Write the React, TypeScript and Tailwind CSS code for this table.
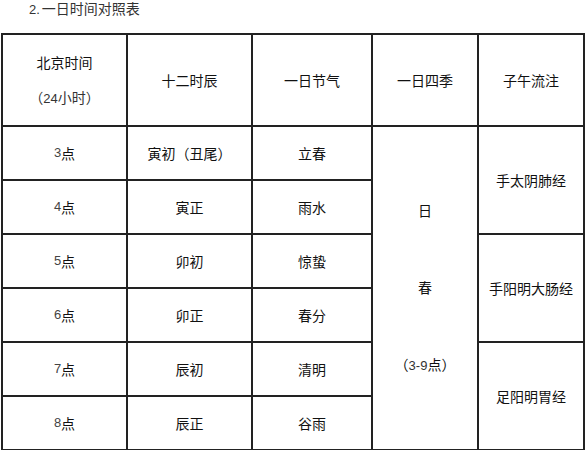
import React from "react";

const rows = [
  { time: "3", shichen: "寅初（丑尾）", jieqi: "立春" },
  { time: "4", shichen: "寅正", jieqi: "雨水" },
  { time: "5", shichen: "卯初", jieqi: "惊蛰" },
  { time: "6", shichen: "卯正", jieqi: "春分" },
  { time: "7", shichen: "辰初", jieqi: "清明" },
  { time: "8", shichen: "辰正", jieqi: "谷雨" },
];

const meridians = ["手太阴肺经", "手阳明大肠经", "足阳明胃经"];

const cell = "bg-white flex items-center justify-center text-center";

export default function App() {
  return (
    <div
      className="w-[585px] h-[450px] overflow-hidden bg-white text-[14px] text-[#111]"
      style={{ fontFamily: '"Noto Sans CJK SC", "Liberation Sans", sans-serif' }}
    >
      {/* title line, cut at the top of the view */}
      <div className="h-[33px] pl-[29px] leading-[16px] text-[#333]">
        <span className="font-['Liberation_Sans'] text-[13px]">2.</span>
        <span className="ml-[2px]">一日时间对照表</span>
      </div>

      <div className="ml-[1px] grid w-[584px] grid-cols-[123px_123px_118px_104px_104px] grid-rows-[90px_repeat(6,52px)] gap-[2px] border-2 border-[#222] bg-[#222]">
        {/* header */}
        <div className={`${cell} flex-col gap-[17px]`}>
          <div className="leading-[18px]">北京时间</div>
          <div className="leading-[18px] text-[#333]">
            （<span className="font-['Liberation_Sans'] text-[13px]">24</span>小时）
          </div>
        </div>
        <div className={cell}>十二时辰</div>
        <div className={cell}>一日节气</div>
        <div className={cell}>一日四季</div>
        <div className={cell}>子午流注</div>

        {rows.map((r, i) => (
          <React.Fragment key={r.time}>
            <div className={cell}>
              <span className="font-['Liberation_Sans'] text-[13px] text-[#444]">{r.time}</span>
              <span>点</span>
            </div>
            <div className={cell}>{r.shichen}</div>
            <div className={cell}>{r.jieqi}</div>
            {i === 0 && (
              <div className="row-span-6 bg-white flex flex-col items-center pt-[73px] gap-[56px] leading-[21px]">
                <div>日</div>
                <div>春</div>
                <div>
                  （<span className="font-['Liberation_Sans'] text-[13px] text-[#333]">3-9</span>点）
                </div>
              </div>
            )}
            {i % 2 === 0 && (
              <div className={`${cell} row-span-2`}>{meridians[i / 2]}</div>
            )}
          </React.Fragment>
        ))}
      </div>
    </div>
  );
}
